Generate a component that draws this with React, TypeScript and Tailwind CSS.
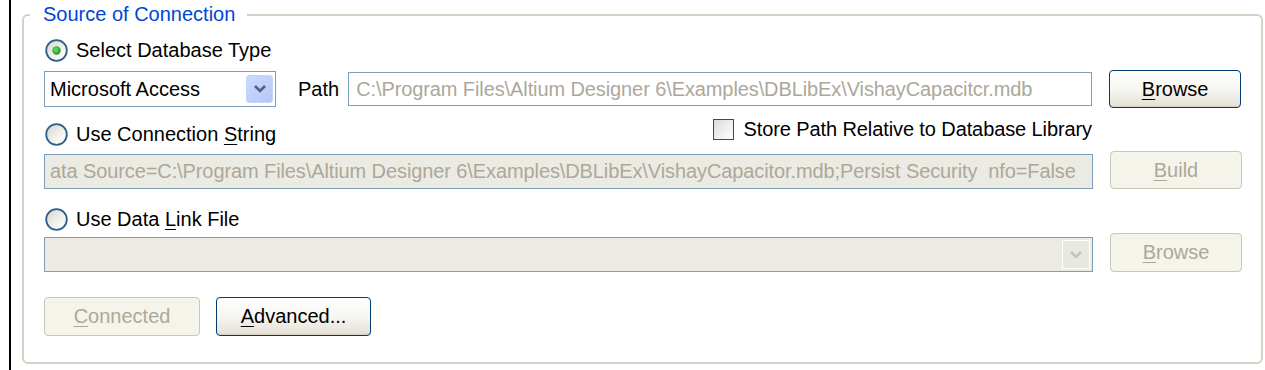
import React from "react";

function Radio({ checked }: { checked?: boolean }) {
  return (
    <svg width="23" height="23" viewBox="0 0 23 23" className="shrink-0">
      <defs>
        <linearGradient id="radioFill" x1="0" y1="0" x2="1" y2="1">
          <stop offset="0" stopColor="#d6d6cf" />
          <stop offset="0.7" stopColor="#f7f7f4" />
          <stop offset="1" stopColor="#ffffff" />
        </linearGradient>
        <radialGradient id="radioDot" cx="0.4" cy="0.4" r="0.6">
          <stop offset="0" stopColor="#6fe06b" />
          <stop offset="1" stopColor="#1a9a1a" />
        </radialGradient>
      </defs>
      <circle cx="11.5" cy="11.5" r="10.3" fill="url(#radioFill)" stroke="#2f5f8c" strokeWidth="1.8" />
      {checked && <circle cx="11.5" cy="11.5" r="4.2" fill="url(#radioDot)" />}
    </svg>
  );
}

function Label({ text, accel }: { text: string; accel?: number }) {
  if (accel === undefined) return <span>{text}</span>;
  return (
    <span>
      {text.slice(0, accel)}
      <span className="underline underline-offset-[3px] decoration-1">{text[accel]}</span>
      {text.slice(accel + 1)}
    </span>
  );
}

function XpButton({
  text,
  accel,
  disabled,
  className,
}: {
  text: string;
  accel?: number;
  disabled?: boolean;
  className: string;
}) {
  return (
    <div
      className={`flex items-center justify-center rounded-[4px] border ${
        disabled
          ? "border-[#c9c7ba] bg-[#f5f4ea] text-[#aca899]"
          : "border-[#003c74] bg-gradient-to-b from-white via-[#f7f6f1] to-[#e3e1d6] text-black shadow-[inset_0_-1px_0_#d6d0c5]"
      } ${className}`}
    >
      <Label text={text} accel={accel} />
    </div>
  );
}

function Chevron({ color }: { color: string }) {
  return (
    <svg width="14" height="10" viewBox="0 0 14 10">
      <path d="M2 2 L7 7 L12 2" fill="none" stroke={color} strokeWidth="2.6" strokeLinejoin="miter" />
    </svg>
  );
}

export default function App() {
  return (
    <div className="flex h-[370px] w-[1265px] bg-white font-['Liberation_Sans',Arial,sans-serif] text-[20px] leading-[23px] text-black">
      <div className="ml-[9px] h-full w-[2px] bg-black" />
      <div className="relative ml-[11px] mt-[14px] flex h-[350px] w-[1241px] flex-col rounded-[6px] border-2 border-[#d3d3c5] pl-[20px] pr-[19px]">
        <div className="absolute left-[6px] top-[-13px] bg-white pl-[13px] pr-[12px] text-[#0046d5]">
          Source of Connection
        </div>

        {/* Select Database Type */}
        <div className="mt-[23px] flex h-[23px] items-center gap-[8px] pl-[1px]">
          <Radio checked />
          <span>Select Database Type</span>
        </div>

        <div className="mt-[8px] flex h-[38px] items-center">
          <div className="flex h-[36px] w-[232px] items-center border border-[#7f9db9] bg-white pl-[5px] pr-[2px]">
            <span>Microsoft Access</span>
            <div className="ml-auto flex h-[28px] w-[27px] items-center justify-center rounded-[3px] border border-[#c3d3fd] bg-gradient-to-br from-[#cddafd] to-[#b2c7f5]">
              <Chevron color="#4d6185" />
            </div>
          </div>
          <span className="ml-[22px]">Path</span>
          <div className="ml-[9px] flex h-[34px] w-[744px] items-center border border-[#7f9db9] bg-white pl-[7px] tracking-[-0.1px] text-[#aca899]">
            C:\Program Files\Altium Designer 6\Examples\DBLibEx\VishayCapacitcr.mdb
          </div>
          <XpButton text="Browse" accel={0} className="ml-[17px] h-[38px] w-[132px]" />
        </div>

        {/* Use Connection String */}
        <div className="mt-[10px] flex h-[30px] w-[1049px] items-start">
          <div className="mt-[5px] flex items-center gap-[8px] pl-[1px]">
            <Radio />
            <Label text="Use Connection String" accel={15} />
          </div>
          <div className="ml-auto mr-[1px] flex items-center gap-[9px]">
            <div className="h-[21px] w-[21px] border border-[#1c5180] bg-gradient-to-br from-[#dcdcd7] to-white" />
            <span className="tracking-[-0.1px]">Store Path Relative to Database Library</span>
          </div>
        </div>

        <div className="mt-[3px] flex h-[38px] items-end">
          <div className="flex h-[35px] w-[1049px] items-center overflow-hidden whitespace-pre border border-[#7f9db9] bg-[#ebebe4] pl-[5px] tracking-[-0.1px] text-[#aca899]">
            {"ata Source=C:\\Program Files\\Altium Designer 6\\Examples\\DBLibEx\\VishayCapacitor.mdb;Persist Security  nfo=False"}
          </div>
          <XpButton text="Build" accel={0} disabled className="ml-[17px] h-[38px] w-[132px]" />
        </div>

        {/* Use Data Link File */}
        <div className="mt-[19px] flex h-[23px] items-center gap-[8px] pl-[1px]">
          <Radio />
          <Label text="Use Data Link File" accel={9} />
        </div>

        <div className="mt-[2px] flex h-[39px] items-end">
          <div className="flex h-[35px] w-[1049px] items-center border border-[#7f9db9] bg-[#ebebe4] pr-[2px]">
            <div className="ml-auto flex h-[29px] w-[28px] items-center justify-center border border-white bg-[#e8e8e1]">
              <Chevron color="#c5c5bd" />
            </div>
          </div>
          <XpButton text="Browse" accel={0} disabled className="ml-[17px] h-[39px] w-[132px]" />
        </div>

        <div className="mt-[25px] flex h-[39px] items-center gap-[16px]">
          <XpButton text="Connected" accel={0} disabled className="h-[39px] w-[156px]" />
          <XpButton text="Advanced..." accel={0} className="h-[39px] w-[155px]" />
        </div>
      </div>
    </div>
  );
}
